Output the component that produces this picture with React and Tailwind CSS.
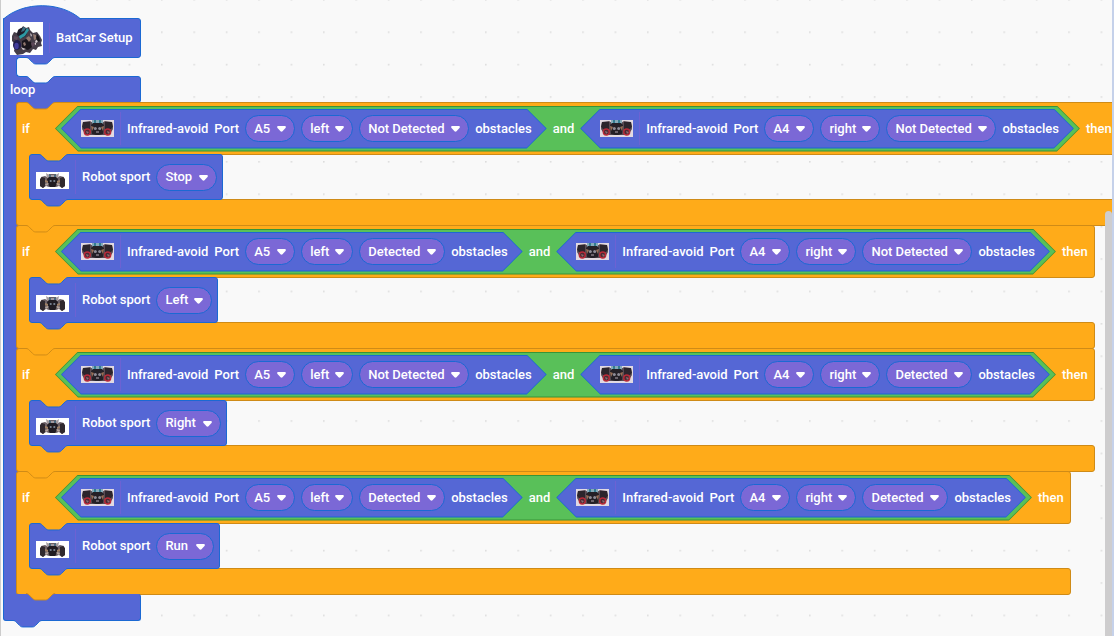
import React from "react";

const NOTCH = "c2 0 3 1 4 2l4 4c1 1 2 2 4 2h12c2 0 3 -1 4 -2l4 -4c1 -1 2 -2 4 -2";

/* Connector that hangs from one block into the top edge of the next. */
function Tab({ className }) {
  return (
    <svg className={"pointer-events-none absolute z-10 h-2 w-[30px] " + className} viewBox="0 0 30 8" aria-hidden="true">
      <g transform="scale(.81)">
        <path d={"M0 0V.6" + NOTCH + "V0z"} stroke="none" />
        <path d={"M0 .6" + NOTCH} fill="none" strokeWidth="1.2" />
      </g>
    </svg>
  );
}

function Divider({ className = "" }) {
  return <span className={"w-px shrink-0 bg-[#6c62d3] " + className} />;
}

function BatCar() {
  return (
    <svg className="h-[33px] w-[33px] shrink-0" viewBox="0 0 33 33" aria-hidden="true">
      <rect width="33" height="33" fill="#fff" />
      <path d="M2 14l2-4 3 1 2-4 3-1 1-2 3 2 3-1 1 3 3 3 4-1 3 4 2 4-1 3 1 3-4 1-2 3-3-1-3 4-4-1-3 2-6 1-3-4 1-5-1-3-2-2z" fill="#453d48" />
      <path d="M8 8l5-3 5 3-2 6-4 2-5-3z" fill="#1d1b28" />
      <path d="M9 14l5-3 3-5 2 2-4 6-5 3z" fill="#2d98a3" />
      <path d="M13 5l3 1-2 3-3 1z" fill="#3d6d80" />
      <ellipse cx="7" cy="23" rx="4" ry="5" fill="#201c4c" />
      <ellipse cx="6.5" cy="24" rx="2.2" ry="3.2" fill="#423c9c" />
      <path d="M12 19l4-2 5 3 1 5-4 3-6-2z" fill="#1a161c" />
      <path d="M16 16l3-2 2 3-2 3zm7-4l3 1 1 4-3 1zM13 21l2-1 1 3-2 1z" fill="#92786f" />
      <path d="M20 11l2 2-1 2zm5 8l3-2 1 2-3 2zM11 25l2 1 3 1-3 1zM24 22l2-2v3z" fill="#d6cccf" />
      <path d="M21 21l3-1 1 3-3 2zM4 14l4 1-1 3-3-1z" fill="#5b4758" />
      <path d="M27 12l2 3 1 4-2 1-2-4z" fill="#171419" />
    </svg>
  );
}

function SensorCar() {
  return (
    <svg className="h-[17px] w-[33px] shrink-0" viewBox="0 0 33 17" aria-hidden="true">
      <rect width="33" height="17" fill="#e2dae2" />
      <path d="M2 2l7-1 3 2h9l3-2 7 1 1 7-3 5-5 1H9l-5-1-3-5z" fill="#5a4c54" />
      <path d="M2 2h7v7H3L1 7zm22 0h7l1 5-2 2h-6z" fill="#2c252c" />
      <path d="M11 0h11v4H11z" fill="#86aab9" />
      <path d="M13 0h2v4h-2zm5 0h2v4h-2z" fill="#347d91" />
      <path d="M10 5l2-2h9l2 2-1 9-4 1h-3l-4-1z" fill="#242027" />
      <path d="M10 6l3 1-2 4zm13 0l-3 1 2 4z" fill="#9a7058" />
      <circle cx="14.3" cy="8.5" r="1.5" fill="#8f8c96" />
      <circle cx="18.7" cy="8.5" r="1.5" fill="#8f8c96" />
      <path d="M15 11h3v2h-3z" fill="#6b626b" />
      <circle cx="6.3" cy="12" r="3" fill="#4a2a33" stroke="#b82a38" strokeWidth="1.4" />
      <circle cx="26.7" cy="12" r="3" fill="#4a2a33" stroke="#b82a38" strokeWidth="1.4" />
      <path d="M5 11l3 1-2 2zm21 0l3 1-2 2z" fill="#8e6c71" />
    </svg>
  );
}

function SportCar() {
  return (
    <svg className="mt-1.5 h-[17px] w-[33px] shrink-0" viewBox="0 0 33 17" aria-hidden="true">
      <rect width="33" height="17" fill="#fff" />
      <path d="M5 5l4-1 2 1 2-3h7l2 3 2-1 4 1 1 9-3 2-3-2-3 1h-7l-3-1-3 2-3-2z" fill="#6c6066" />
      <path d="M4 7l2-2 3 1v8l-2 2-3-2zm25 0l-2-2-3 1v8l2 2 3-2z" fill="#30292e" />
      <path d="M10 1l3 2h7l3-2-1 5H11z" fill="#a39a9e" />
      <path d="M13 2l2 1v3h-2zm5 1l2-1v4h-2z" fill="#4c6a7e" />
      <path d="M11 7l2-2h7l2 2-1 5-2 3h-5l-2-3z" fill="#211c22" />
      <path d="M9 8l3 1v2l-3-1zm15 0l-3 1v2l3-1z" fill="#a08064" />
      <circle cx="14.7" cy="9" r="1.1" fill="#7d8796" />
      <circle cx="18.3" cy="9" r="1.1" fill="#7d8796" />
      <path d="M9 12l3-1 1 1-3 2zm15 0l-3-1-1 1 3 2z" fill="#b5a59d" />
    </svg>
  );
}

const PILL_WIDTH = {
  A5: "w-[50px]",
  A4: "w-[50px]",
  left: "w-[52px]",
  right: "w-[60px]",
  Detected: "w-[86px]",
  "Not Detected": "w-[110px]",
  Stop: "w-[61px]",
  Left: "w-[56px]",
  Right: "w-[65px]",
  Run: "w-[58px]",
};

function Pill({ label, value, options }) {
  return (
    <span className="relative flex shrink-0">
      <select
        aria-label={label}
        defaultValue={value}
        className={"h-[27px] appearance-none rounded-full border border-[#1b69d3] bg-[#7b68d6] pl-2 text-[13px] font-medium text-white outline-none " + PILL_WIDTH[value]}
      >
        {options.map((o) => (
          <option key={o}>{o}</option>
        ))}
      </select>
      <svg className="pointer-events-none absolute top-[11px] right-[9px] h-[6px] w-[9px]" viewBox="0 0 9 6" aria-hidden="true">
        <path d="M1.3 0h6.4c1.1 0 1.5 1.1.8 1.9L5.5 5.2c-.6.6-1.4.6-2 0L.5 1.9C-.2 1.1.2 0 1.3 0z" fill="#fff" />
      </svg>
    </span>
  );
}

function Sensor({ port, side, state }) {
  return (
    <div className="h-10 shrink-0 bg-[#1b69d3] p-px [clip-path:polygon(0_50%,20px_0,calc(100%-20px)_0,100%_50%,calc(100%-20px)_100%,20px_100%)]">
      <div className="flex h-full items-center gap-1.5 bg-[#5567d5] pr-[14px] pl-[19px] [clip-path:polygon(0_50%,19px_0,calc(100%-19px)_0,100%_50%,calc(100%-19px)_100%,19px_100%)]">
        <SensorCar />
        <Divider className="h-[33px]" />
        <span>Infrared-avoid</span>
        <span>Port</span>
        <Pill label="Port" value={port} options={["A4", "A5"]} />
        <Pill label="Side" value={side} options={["left", "right"]} />
        <Pill label="State" value={state} options={["Detected", "Not Detected"]} />
        <span>obstacles</span>
      </div>
    </div>
  );
}

function Sport({ action }) {
  return (
    <div className="relative flex h-[46px] w-fit items-center gap-1.5 rounded-[3px] border border-[#1b69d3] bg-[#5567d5] pr-[5px] pl-1.5">
      <Tab className="-top-px left-[9px] fill-[#ffab19] stroke-[#1b69d3]" />
      <SportCar />
      <Divider className="h-[34px]" />
      <span>Robot sport</span>
      <Pill label="Robot sport" value={action} options={["Run", "Stop", "Left", "Right"]} />
      <Tab className="top-[44px] left-[9px] fill-[#5567d5] stroke-[#1b69d3]" />
    </div>
  );
}

function IfBlock({ first, left, right, action }) {
  return (
    <section className="relative w-fit">
      <div className="flex h-[53px] items-center rounded-t-[3px] rounded-br-[3px] border border-[#cf8b17] bg-[#ffab19] pr-1.5 pl-[5px]">
        <Tab className={"top-0 left-[10px] stroke-[#cf8b17] " + (first ? "fill-[#5567d5]" : "fill-[#ffab19]")} />
        <span className="w-[33px]">if</span>
        <div className="h-[46px] bg-[#389438] p-px [clip-path:polygon(0_50%,23px_0,calc(100%-23px)_0,100%_50%,calc(100%-23px)_100%,23px_100%)]">
          <div className="flex h-full items-center gap-1.5 bg-[#59c059] px-[5px] [clip-path:polygon(0_50%,22px_0,calc(100%-22px)_0,100%_50%,calc(100%-22px)_100%,22px_100%)]">
            <Sensor port="A5" side="left" state={left} />
            <span>and</span>
            <Sensor port="A4" side="right" state={right} />
          </div>
        </div>
        <span className="pl-1.5">then</span>
      </div>
      <div className="relative -my-px w-[18px] border-l border-[#cf8b17] bg-[#ffab19] pl-3">
        <Sport action={action} />
      </div>
      <div className="h-[27px] rounded-r-[3px] rounded-bl-[3px] border border-[#cf8b17] bg-[#ffab19]" />
    </section>
  );
}

const RULES = [
  { left: "Not Detected", right: "Not Detected", action: "Stop" },
  { left: "Detected", right: "Not Detected", action: "Left" },
  { left: "Not Detected", right: "Detected", action: "Right" },
  { left: "Detected", right: "Detected", action: "Run" },
];

export default function App() {
  return (
    <main className="relative min-h-screen overflow-hidden border-r-2 border-l border-r-[#c5d1ea] border-l-[#cccccc] bg-[#f9f9f9] pt-[18px] pl-[2px] font-[Roboto,sans-serif] text-[13px] leading-4 font-medium whitespace-nowrap text-white">
      <svg className="absolute inset-0 h-full w-full" aria-hidden="true">
        <defs>
          <pattern id="dots" x="-2" y="-1" width="32.4" height="32.4" patternUnits="userSpaceOnUse">
            <rect x="0" y="0" width="1.6" height="1.6" fill="#dddddd" />
          </pattern>
        </defs>
        <rect width="100%" height="100%" fill="url(#dots)" />
      </svg>

      <div className="relative">
        <header className="relative flex h-10 w-[138px] items-center gap-1.5 rounded-r-[3px] border border-[#1b69d3] bg-[#5567d5] pl-1.5">
          <svg className="absolute -top-[14px] -left-px h-[15px] w-[79px]" viewBox="0 0 79 15" aria-hidden="true">
            <path d="M.5 15V14C20.5 -3.8 58 -3.8 78.3 14.5V15z" fill="#5567d5" />
            <path d="M.5 15V14C20.5 -3.8 58 -3.8 78.3 14.5" fill="none" stroke="#1b69d3" />
          </svg>
          <BatCar />
          <Divider className="h-[30px]" />
          <h1>BatCar Setup</h1>
        </header>

        <div className="relative z-10 -my-px w-[18px] border-l border-[#1b69d3] bg-[#5567d5] pl-3">
          <div className="relative h-5 w-6 rounded-l-[4px] border-y border-l border-[#1b69d3] bg-[#f9f9f9]">
            <Tab className="-top-px left-[9px] fill-[#5567d5] stroke-[#1b69d3]" />
            <Tab className="top-[18px] left-[9px] fill-[#f9f9f9] stroke-[#1b69d3]" />
          </div>
        </div>

        <div className="flex h-[27px] w-[138px] items-center rounded-r-[3px] border border-[#1b69d3] bg-[#5567d5] pt-px pl-1.5">
          <span>loop</span>
        </div>

        <div className="relative z-10 -my-px flex">
          <div className="w-[15px] shrink-0 border-l border-[#1b69d3] bg-[#5567d5]" />
          <div className="-ml-0.5 flex flex-col">
            {RULES.map((rule, i) => (
              <div key={rule.action} className="-mb-px last:mb-0">
                <IfBlock first={i === 0} {...rule} />
              </div>
            ))}
          </div>
        </div>

        <footer className="relative z-10 h-[27px] w-[138px]">
          <div className="h-full rounded-r-[3px] rounded-bl-[3px] border border-t-0 border-[#1b69d3] bg-[#5567d5]" />
          <Tab className="-top-px left-[23px] fill-[#ffab19] stroke-[#cf8b17]" />
          <Tab className="top-[26px] left-[10px] fill-[#5567d5] stroke-[#1b69d3]" />
        </footer>
      </div>

      <div className="absolute top-[211px] right-0 bottom-0 z-20 w-[7px] rounded-t-full bg-[#cecdce]" />
    </main>
  );
}
